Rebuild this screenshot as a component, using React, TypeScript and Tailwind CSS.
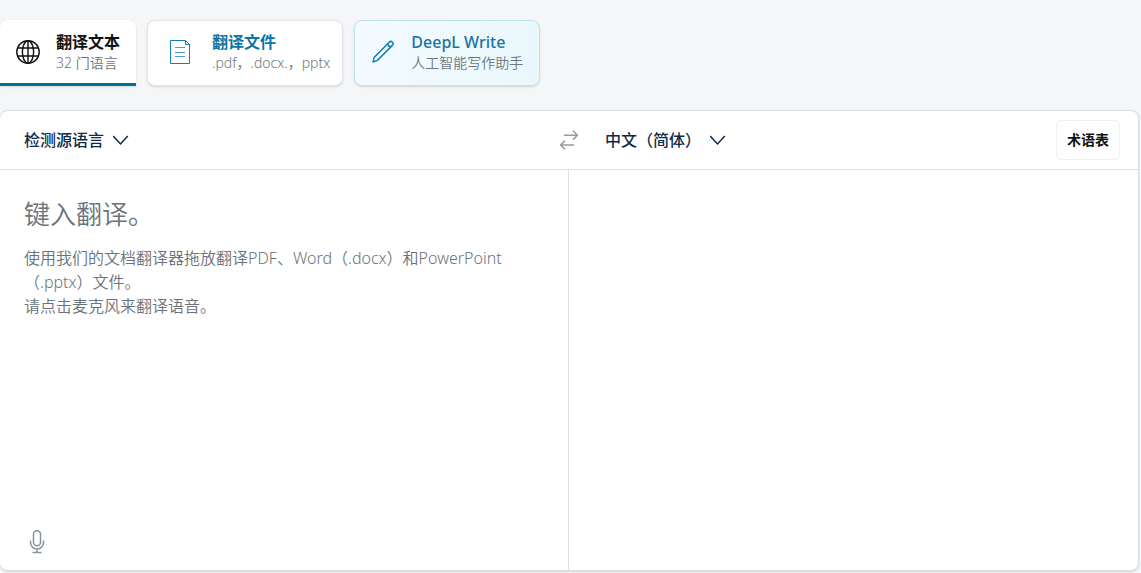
import React, { useState } from 'react';

interface LanguageSelectProps {
  label: string;
  options: string[];
}

const LanguageSelect = ({ label, options }: LanguageSelectProps) => {
  return (
    <div className="relative flex items-center text-[#0f2b46]">
      <select
        aria-label={label}
        className="h-10 appearance-none bg-transparent pr-6 text-base font-medium outline-none cursor-pointer"
      >
        {options.map((option) => (
          <option key={option}>{option}</option>
        ))}
      </select>
      <svg
        className="pointer-events-none absolute right-0 h-4 w-4"
        viewBox="0 0 16 16"
        fill="none"
        stroke="currentColor"
        strokeWidth="1.5"
      >
        <path d="M0.2 4l7.3 8 7.3-8" />
      </svg>
    </div>
  );
};

const GlobeIcon = () => (
  <svg className="h-6 w-6 shrink-0" viewBox="0 0 24 24" fill="none" stroke="#111" strokeWidth="1.4">
    <circle cx="12" cy="12" r="11.2" />
    <ellipse cx="12" cy="12" rx="5.6" ry="11.2" />
    <path d="M12 1v22M2 8h20M2 16h20" />
  </svg>
);

const DocumentIcon = () => (
  <svg className="h-6 w-6 shrink-0" viewBox="0 0 24 24" fill="none" stroke="#1580ab">
    <path d="M2.5 0.5h15l4 4v19h-19z" />
    <path d="M17.5 0.5v4h4" />
    <path d="M7 7.5h10M7 12.5h10M7 16.5h10" strokeOpacity="0.75" />
  </svg>
);

const PencilIcon = () => (
  <svg
    className="h-6 w-6 shrink-0"
    viewBox="0 0 24 24"
    fill="none"
    stroke="#1580ab"
    strokeWidth="1.5"
    strokeLinejoin="round"
  >
    <path d="M2 22l1.2-4.6L18.2 2.2a2.1 2.1 0 0 1 3.2 3.2L6.4 20.4z" />
    <path d="M17 3.6l.4 2.4 2.6.6" />
  </svg>
);

const App = () => {
  const [text, setText] = useState('');

  return (
    <div className="flex min-h-screen flex-col bg-[#f5f6f8] pt-5 pr-[2px] pb-[2px] font-['Noto_Sans','Noto_Sans_CJK_SC',sans-serif]">
      <nav className="flex gap-[11px] text-left">
        <button className="flex h-[66px] items-center gap-4 rounded-t-lg border-b-3 border-[#006f9e] bg-white px-4 text-left shadow-sm">
          <GlobeIcon />
          <span className="pt-[2px]">
            <span className="block text-base leading-5 font-bold text-[#111]">翻译文本</span>
            <span className="block text-sm leading-[22px] font-[350] text-[#6e7780]">32 门语言</span>
          </span>
        </button>
        <button className="flex h-[66px] items-center gap-5 rounded-lg border border-[#e3e6ea] bg-white pr-3 pb-[2px] pl-5 text-left shadow-sm">
          <DocumentIcon />
          <span className="pt-[2px]">
            <span className="block text-base leading-5 font-bold text-[#0b75a5]">翻译文件</span>
            <span className="block text-sm leading-[22px] font-[350] text-[#6e7780]">.pdf，.docx.，pptx</span>
          </span>
        </button>
        <button className="flex h-[66px] items-center gap-4 rounded-lg border border-[#bfe3e8] bg-linear-to-r from-[#f3fbff] to-[#eaf8fb] px-4 pb-[2px] text-left shadow-sm">
          <PencilIcon />
          <span className="pt-[2px]">
            <span className="block text-base leading-5 font-medium text-[#1a73a3]">DeepL Write</span>
            <span className="block text-sm leading-[22px] font-[350] text-[#6e7780]">人工智能写作助手</span>
          </span>
        </button>
      </nav>

      <main className="mt-6 flex grow flex-col rounded-lg border-y border-r border-[#dadde1] bg-white shadow-sm">
        <header className="grid grid-cols-[1fr_auto_1fr] items-center border-b border-[#dadde1] py-[9px]">
          <div className="flex pl-6">
            <LanguageSelect label="源语言" options={['检测源语言', '英语', '中文', '日语']} />
          </div>
          <button aria-label="交换语言" className="text-[#959ca3]">
            <svg className="h-6 w-6" viewBox="0 0 24 24" fill="none" stroke="currentColor" strokeWidth="1.5">
              <path d="M7 7.2h13M16 2.8l4.4 4.4-4.4 4.4" />
              <path d="M17 17H4M8 12.6L3.6 17 8 21.4" />
            </svg>
          </button>
          <div className="flex items-center justify-between pr-[18px] pl-6">
            <LanguageSelect label="目标语言" options={['中文（简体）', '英语', '日语']} />
            <button className="h-10 rounded-sm border border-[#f0f1f3] px-[10px] text-sm font-bold text-[#111]">
              术语表
            </button>
          </div>
        </header>

        <div className="grid grow grid-cols-2">
          <section className="flex flex-col border-r border-[#dadde1]">
            <div className="grid grow">
              {!text && (
                <label
                  htmlFor="source-text"
                  className="col-start-1 row-start-1 cursor-text py-6 pr-14 pl-6 text-[#6a737c]"
                >
                  <span className="block text-[26px] leading-[40px] font-[350]">键入翻译。</span>
                  <span className="mt-3 block text-base leading-6 font-[350]">
                    使用我们的文档翻译器拖放翻译PDF、Word（.docx）和PowerPoint（.pptx）文件。
                    <br />
                    请点击麦克风来翻译语音。
                  </span>
                </label>
              )}
              <textarea
                id="source-text"
                value={text}
                onChange={(e) => setText(e.target.value)}
                className="col-start-1 row-start-1 resize-none bg-transparent py-6 pr-14 pl-6 text-2xl outline-none"
              />
            </div>
            <div className="flex px-6 pb-4">
              <button aria-label="语音输入" className="text-[#8a9299]">
                <svg className="h-6 w-6" viewBox="0 0 24 24" fill="none" stroke="currentColor" strokeWidth="1.5">
                  <rect x="9.5" y="0.8" width="7" height="15" rx="3.5" />
                  <path d="M6.5 10.5v2a6.5 6.5 0 0 0 13 0v-2M13 19v3.5M8.5 22.5h9" />
                </svg>
              </button>
            </div>
          </section>
          <section aria-label="译文" />
        </div>
      </main>
    </div>
  );
};

export default App;
